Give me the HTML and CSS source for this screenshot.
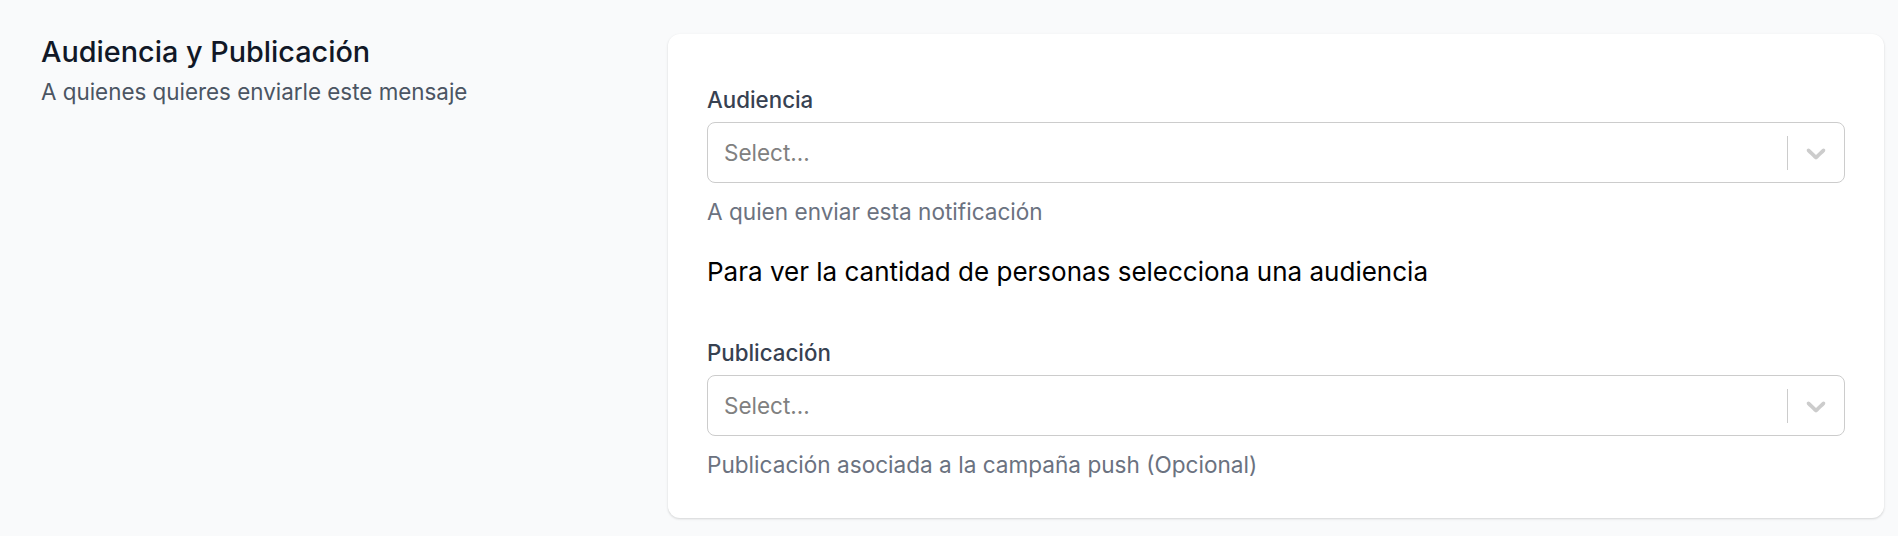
FILE: index.html
```html
<!DOCTYPE html>
<html lang="es">
<head>
  <meta charset="UTF-8">
  <title>Audiencia y Publicación</title>
  <link rel="stylesheet" href="styles.css">
</head>
<body>

<div class="section">
  <!-- Descripción de la sección -->
  <div class="section-info">
    <h3 class="section-title">Audiencia y Publicación</h3>
    <p class="section-desc">A quienes quieres enviarle este mensaje</p>
  </div>

  <div class="card">
    <div class="field">
      <label class="field-label">Audiencia</label>
      <div class="select">
        <div class="select-value">Select...</div>
        <div class="select-indicators">
          <span class="select-separator"></span>
          <div class="select-arrow">
            <svg viewBox="0 0 20 20" width="32" height="32" aria-hidden="true"><path d="M4.516 7.548c0.436-0.446 1.043-0.481 1.576 0l3.908 3.747 3.908-3.747c0.533-0.481 1.141-0.446 1.574 0 0.436 0.445 0.408 1.197 0 1.615-0.406 0.418-4.695 4.502-4.695 4.502-0.217 0.223-0.502 0.335-0.787 0.335s-0.57-0.112-0.789-0.335c0 0-4.287-4.084-4.695-4.502s-0.436-1.17 0-1.615z"></path></svg>
          </div>
        </div>
      </div>
      <p class="field-help">A quien enviar esta notificación</p>
    </div>

    <p class="audience-count">Para ver la cantidad de personas selecciona una audiencia</p>

    <div class="field field-spaced">
      <label class="field-label">Publicación</label>
      <div class="select">
        <div class="select-value">Select...</div>
        <div class="select-indicators">
          <span class="select-separator"></span>
          <div class="select-arrow">
            <svg viewBox="0 0 20 20" width="32" height="32" aria-hidden="true"><path d="M4.516 7.548c0.436-0.446 1.043-0.481 1.576 0l3.908 3.747 3.908-3.747c0.533-0.481 1.141-0.446 1.574 0 0.436 0.445 0.408 1.197 0 1.615-0.406 0.418-4.695 4.502-4.695 4.502-0.217 0.223-0.502 0.335-0.787 0.335s-0.57-0.112-0.789-0.335c0 0-4.287-4.084-4.695-4.502s-0.436-1.17 0-1.615z"></path></svg>
          </div>
        </div>
      </div>
      <p class="field-help">Publicación asociada a la campaña push (Opcional)</p>
    </div>
  </div>
</div>

</body>
</html>
```

FILE: styles.css
```css
body {
  margin: 0;
  background: #f9fafb;
  font-family: 'Inter', 'Noto Sans', sans-serif;
  color: #111827;
}

.section {
  display: grid;
  grid-template-columns: repeat(3, 1fr);
  column-gap: 38px;
  padding: 34px 14px 18px 41px;
}

.section-title {
  margin: 0;
  font-size: 28.8px;
  line-height: 36px;
  font-weight: 500;
  color: #111827;
}

.section-desc {
  margin: 7px 0 0;
  font-size: 22.4px;
  line-height: 30px;
  color: #4b5563;
}

.card {
  grid-column: span 2;
  background: white;
  border-radius: 12px;
  box-shadow: 0 1px 3px rgba(0,0,0,0.1), 0 1px 2px rgba(0,0,0,0.06);
  padding: 52px 39px 39px 39px;
}

.field-label {
  display: block;
  font-size: 22.3px;
  line-height: 28px;
  font-weight: 500;
  color: #374151;
  margin-bottom: 8px;
}

/* react-select style control */
.select {
  display: flex;
  align-items: center;
  height: 61px;
  box-sizing: border-box;
  border: 1.5px solid #cccccc;
  border-radius: 8px;
  background: white;
}

.select-value {
  flex: 1;
  padding-left: 16px;
  font-size: 22.5px;
  color: #808080;
}

.select-indicators {
  display: flex;
  align-items: center;
  align-self: stretch;
}

.select-separator {
  width: 1.5px;
  height: 34px;
  background: #cccccc;
}

.select-arrow {
  display: flex;
  padding: 0 12px;
  fill: #cccccc;
}

.field-help {
  margin: 15px 0 0;
  font-size: 22.6px;
  line-height: 28px;
  color: #6b7280;
}

.audience-count {
  margin: 30px 0 0;
  font-size: 26px;
  line-height: 32px;
  color: #000;
}

.field-spaced {
  margin-top: 51px;
}
```
